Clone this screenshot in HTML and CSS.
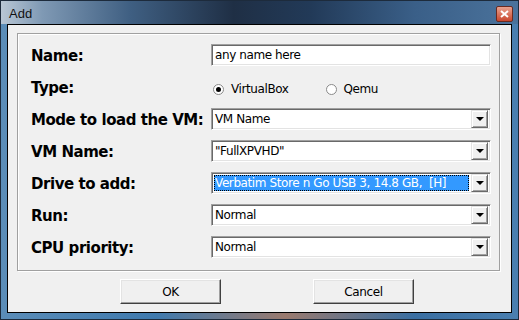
FILE: index.html
```html
<!DOCTYPE html>
<html lang="en">
<head>
  <meta charset="UTF-8" />
  <title>Add</title>
  <link rel="stylesheet" href="styles.css">
</head>
<body>
  <div class="window">
    <div class="titlebar">
      <span class="title">Add</span>
      <span class="close-btn">
        <svg width="9" height="8" viewBox="0 0 9 8"><path d="M1 1 L8 7 M8 1 L1 7" stroke="#fff" stroke-width="2"/></svg>
      </span>
    </div>
    <div class="client">
      <div class="groupbox">
        <div class="form">
          <label class="lbl">Name:</label>
          <div class="field textbox">any name here</div>

          <label class="lbl">Type:</label>
          <div class="radios">
            <span class="radio checked"></span><span class="radio-text">VirtualBox</span>
            <span class="radio qemu"></span><span class="radio-text">Qemu</span>
          </div>

          <label class="lbl">Mode to load the VM:</label>
          <div class="field combo"><span class="value">VM Name</span><span class="arrow"></span></div>

          <label class="lbl">VM Name:</label>
          <div class="field combo"><span class="value">"FullXPVHD"</span><span class="arrow"></span></div>

          <label class="lbl">Drive to add:</label>
          <div class="field combo"><span class="value selected">Verbatim Store n Go USB 3, 14.8 GB,&nbsp; [H]</span><span class="arrow"></span></div>

          <label class="lbl">Run:</label>
          <div class="field combo"><span class="value">Normal</span><span class="arrow"></span></div>

          <label class="lbl">CPU priority:</label>
          <div class="field combo"><span class="value">Normal</span><span class="arrow"></span></div>
        </div>
      </div>
      <div class="buttons">
        <button class="btn">OK</button>
        <button class="btn">Cancel</button>
      </div>
    </div>
  </div>
</body>
</html>
```

FILE: styles.css
```css
body {
  margin: 0;
  background: #fff;
  font-family: "DejaVu Sans", sans-serif;
}

.window {
  width: 519px;
  height: 320px;
  box-sizing: border-box;
  padding: 0 6px 6px 6px;
  background: linear-gradient(90deg, #5b8db8 0%, #3f7aae 30%, #9a7a6e 55%, #3a6fa2 80%, #4a7fb0 100%);
  border: 1px solid #1d2b3c;
  display: flex;
  flex-direction: column;
}

.titlebar {
  height: 23px;
  display: flex;
  align-items: center;
  justify-content: space-between;
  margin: 0 -6px;
  padding: 0 6px 0 8px;
  background: linear-gradient(90deg, #b8c6d4 0%, #7f99b4 8%, #3f5f82 25%, #1f2f45 45%, #223a58 60%, #3a5f88 80%, #4b739c 100%);
}

.title {
  font-family: "Liberation Sans", sans-serif;
  font-size: 13px;
  color: #111;
  padding-top: 2px;
}

.close-btn {
  width: 15px;
  height: 14px;
  margin-right: -1px;
  margin-top: 2px;
  background: linear-gradient(#e9a28f, #c9472e);
  border: 1px solid #6b2a20;
  border-radius: 2px;
  display: flex;
  align-items: center;
  justify-content: center;
}

.client {
  flex: 1;
  background: #f0f0f0;
  border: 1px solid #000;
  padding: 8px 11px 0 9px;
  display: flex;
  flex-direction: column;
}

.groupbox {
  height: 238px;
  box-sizing: border-box;
  border: 1px solid #a0a0a0;
  box-shadow: 1px 1px 0 #fff, inset 1px 1px 0 #fff;
  padding: 10px 0 0 13px;
}

.form {
  display: grid;
  grid-template-columns: 180px 280px;
  grid-auto-rows: 22px;
  row-gap: 10px;
  align-items: center;
}

.lbl {
  font-family: "DejaVu Sans", sans-serif;
  font-weight: bold;
  font-size: 15px;
  color: #000;
  letter-spacing: -0.45px;
  padding-top: 2px;
}

.field {
  height: 22px;
  box-sizing: border-box;
  background: #fff;
  border-top: 1px solid #a0a0a0;
  border-left: 1px solid #a0a0a0;
  border-right: 1px solid #fff;
  border-bottom: 1px solid #fff;
  box-shadow: inset 1px 1px 0 #696969, inset -1px -1px 0 #e3e3e3;
  font-size: 12px;
  letter-spacing: -0.4px;
  color: #000;
  display: flex;
  align-items: center;
}

.textbox {
  padding-left: 3px;
}

.combo .value {
  flex: 1;
  margin-left: 2px;
  padding-left: 1px;
  height: 16px;
  line-height: 16px;
}

.combo .value.selected {
  background: #3399ff;
  color: #fff;
  outline: 1px dotted #000;
  outline-offset: -1px;
  margin-right: 2px;
}

.arrow {
  width: 17px;
  height: 18px;
  margin-right: 2px;
  box-sizing: border-box;
  background: #f0f0f0;
  border-top: 1px solid #e3e3e3;
  border-left: 1px solid #e3e3e3;
  border-right: 1px solid #696969;
  border-bottom: 1px solid #696969;
  box-shadow: inset 1px 1px 0 #fff, inset -1px -1px 0 #a0a0a0;
  position: relative;
}

.arrow::after {
  content: "";
  position: absolute;
  left: 4px;
  top: 6px;
  border-left: 4px solid transparent;
  border-right: 4px solid transparent;
  border-top: 4px solid #000;
}

.radios {
  display: flex;
  align-items: center;
  font-size: 12px;
  letter-spacing: -0.4px;
  padding: 4px 0 0 2px;
}

.radio {
  width: 9px;
  height: 9px;
  border-radius: 50%;
  border: 1px solid #8a8a8a;
  background: #fff;
  position: relative;
}

.radio.checked::after {
  content: "";
  position: absolute;
  left: 2px;
  top: 2px;
  width: 5px;
  height: 5px;
  border-radius: 50%;
  background: #000;
}

.radio.qemu {
  margin-left: 37px;
}

.radio-text {
  margin-left: 7px;
}

.buttons {
  display: flex;
  gap: 92px;
  padding: 8px 0 0 103px;
}

.btn {
  width: 101px;
  height: 25px;
  font-family: "DejaVu Sans", sans-serif;
  font-size: 12px;
  letter-spacing: -0.4px;
  color: #000;
  background: #f0f0f0;
  border-top: 1px solid #fff;
  border-left: 1px solid #fff;
  border-right: 1px solid #404040;
  border-bottom: 1px solid #404040;
  box-shadow: inset -1px -1px 0 #a0a0a0, inset 1px 1px 0 #e3e3e3;
  padding: 0;
}
```
